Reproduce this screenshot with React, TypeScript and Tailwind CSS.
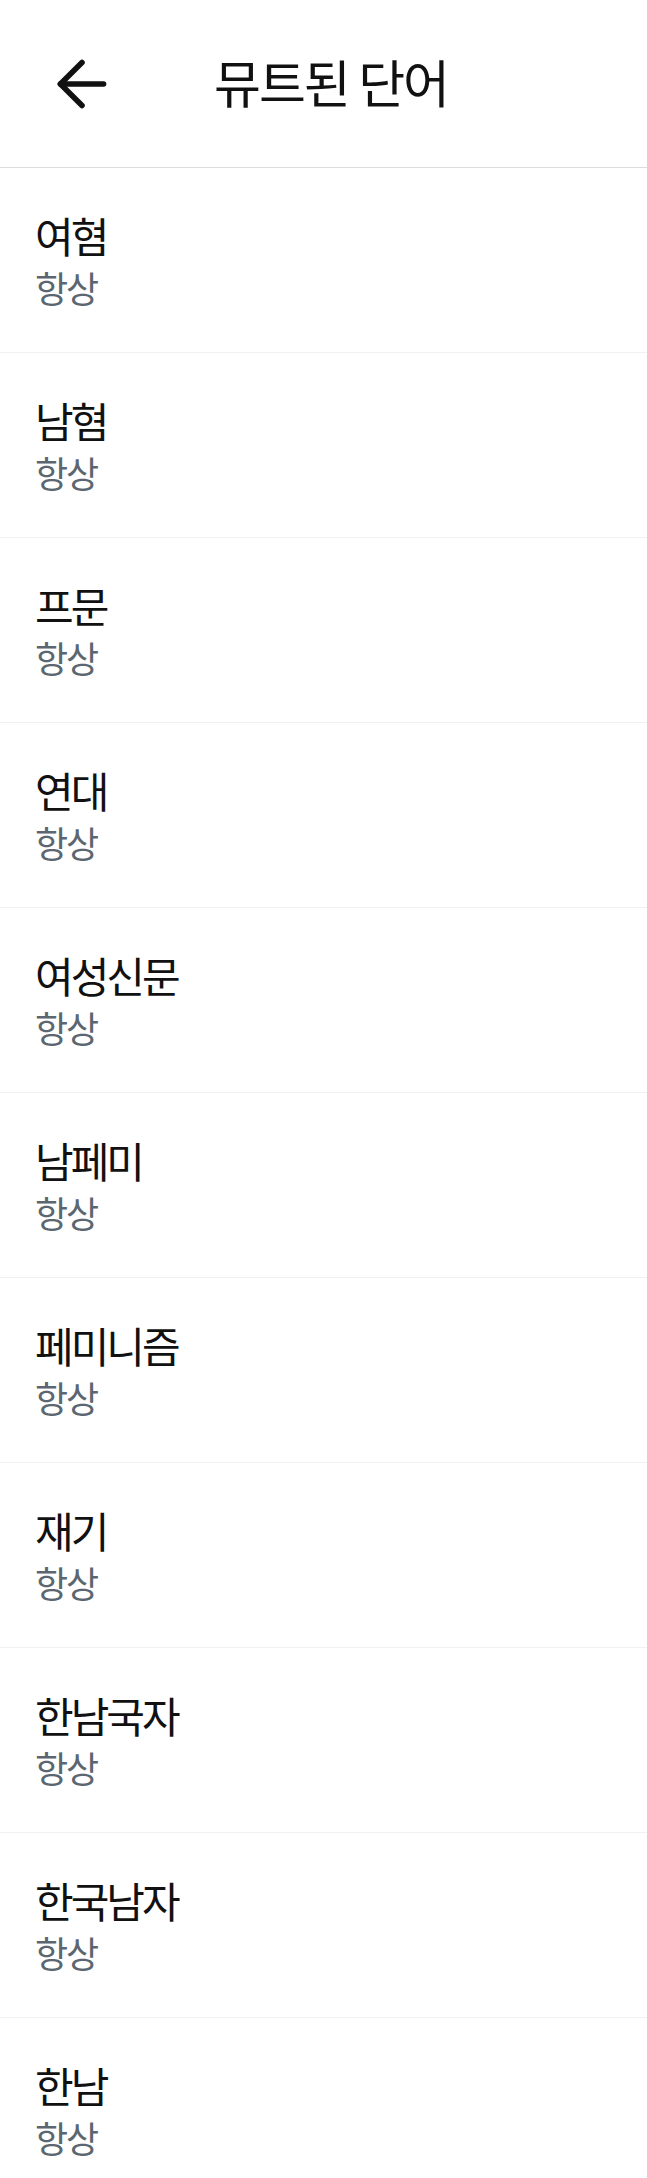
import { ArrowLeft } from "lucide-react";

const words = [
  "여혐",
  "남혐",
  "프문",
  "연대",
  "여성신문",
  "남페미",
  "페미니즘",
  "재기",
  "한남국자",
  "한국남자",
  "한남",
];

const font = { fontFamily: '"Noto Sans CJK KR", "Noto Sans", sans-serif' };

export default function App() {
  return (
    <div className="w-[647px] h-[2178px] overflow-hidden bg-white text-[#111]" style={font}>
      <header className="h-[168px] flex items-center border-b border-[#dcdcdc]">
        <div className="w-[214px] pl-[45px] flex items-center">
          <ArrowLeft size={74} strokeWidth={1.8} color="#111" />
        </div>
        <h1 className="text-[51px] leading-none font-normal tracking-[-2px] pb-1">뮤트된 단어</h1>
      </header>

      <ul>
        {words.map((w) => (
          <li
            key={w}
            className="h-[185px] flex flex-col justify-center pl-[35px] border-b border-[#f1f1f1]"
          >
            <div className="text-[42px] leading-[54px] tracking-[-3px]">{w}</div>
            <div className="text-[36px] leading-[50px] tracking-[-2px] text-[#5b6670]">항상</div>
          </li>
        ))}
      </ul>
    </div>
  );
}
